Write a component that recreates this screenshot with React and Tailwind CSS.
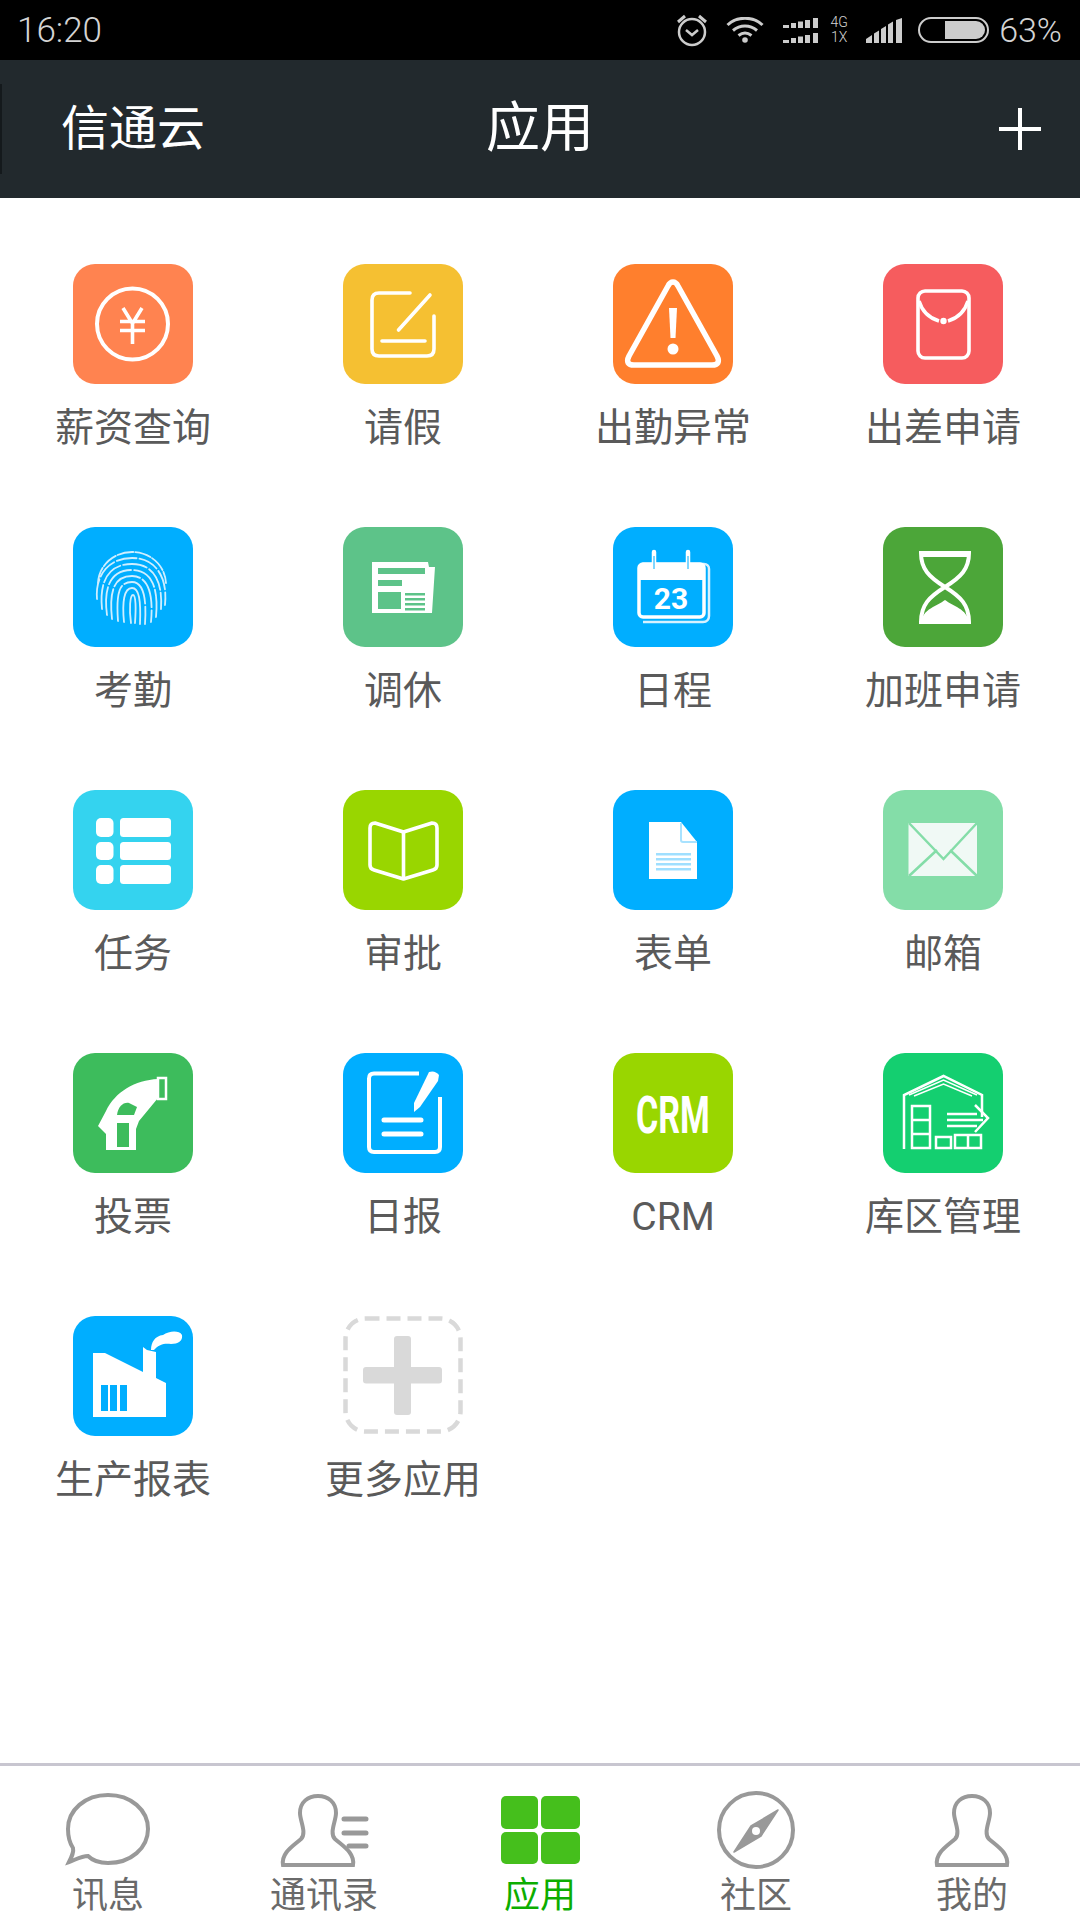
import React from "react";

const W = "#ffffff";

// app icons, all drawn on a 120x120 box
const Salary = () => (
  <g fill="none" stroke={W}>
    <circle cx="59.5" cy="60" r="35.5" strokeWidth="4" />
    <path d="M50 44l9.500 15.500L69 44M59.500 59v21M47 57.500h25M47 66.500h25" strokeWidth="3.600" />
  </g>
);
const Leave = () => (
  <g fill="none" stroke={W} strokeWidth="3.600" strokeLinecap="round">
    <path d="M67 29H36q-7 0-7 7v49q0 7 7 7h48q7 0 7-7V52" />
    <path d="M87 31L55.500 66M39 77h43" />
  </g>
);
const Alert = () => (
  <g>
    <path d="M60 18c-3 0-4 2-5 4L16 92c-3 6-1 9 5 9h78c6 0 8-3 5-9L65 22c-1-2-2-4-5-4z" fill="none" stroke={W} strokeWidth="5.500" strokeLinejoin="round" />
    <path d="M56 44h8l-1.500 30h-5z" fill={W} />
    <circle cx="60" cy="85" r="5.500" fill={W} />
  </g>
);
const RedPacket = () => (
  <g fill="none" stroke={W} strokeWidth="3.600">
    <rect x="35" y="27" width="51" height="67" rx="7" />
    <path d="M36 37c3 10 10 17 20 20M85 37c-3 10-10 17-20 20" />
    <circle cx="60.500" cy="57" r="3.200" fill={W} stroke="none" />
  </g>
);
const Fingerprint = () => (
  <g fill="none" stroke="#cfeeff" strokeWidth="1.800" strokeLinecap="round">
    <path d="M25 56C26 38 41 25 59 25c18 0 33 13 34 31" strokeDasharray="16 2" />
    <path d="M24 72c-2-24 12-41 35-41 22 0 36 17 33 47" strokeDasharray="20 3" />
    <path d="M29 82c-3-30 8-45 30-45 20 0 31 15 29 45" strokeDasharray="24 3" />
    <path d="M34 88c-4-30 5-45 25-45 18 0 27 15 24 47" strokeDasharray="28 3" />
    <path d="M39 92c-3-28 2-43 20-43 14 0 22 14 19 46" strokeDasharray="30 3" />
    <path d="M45 94c-2-26 0-39 14-39 10 0 15 12 13 42" strokeDasharray="36 3" />
    <path d="M51 95c-2-20 0-34 8-34 7 0 9 12 8 36" />
    <path d="M58 96c-2-14-1-28 2-28 3 0 3 14 2 28" />
  </g>
);
const News = () => (
  <g>
    <path d="M29 35h56l1 5h6l-3 46H29z" fill={W} />
    <path d="M35 41h47v6H35zM35 53h24v6H35zM35 65h23v17H35zM62 66h20v2.400H62zM62 71h20v2.400H62zM62 76h20v2.400H62zM62 81h20v2.400H62z" fill="#5dc389" />
  </g>
);
const Calendar = () => (
  <g>
    <path d="M29 37h62c3 0 5 2 5 5v47c0 3-2 6-6 6H30" fill="none" stroke="#d8f1ff" strokeWidth="2.500" />
    <rect x="26" y="37" width="65" height="53" rx="4" fill="#00aeff" stroke={W} strokeWidth="3.500" />
    <path d="M26 41q0-4 4-4h57q4 0 4 4v12H26z" fill={W} />
    <path d="M41 25v20M75 25v20" stroke={W} strokeWidth="4.500" strokeLinecap="round" />
    <path d="M41 29v13M75 29v13" stroke="#00aeff" strokeWidth="1" />
    <text x="58" y="82" textAnchor="middle" fontSize="30" fontWeight="700" fill={W} fontFamily="Roboto, sans-serif">23</text>
  </g>
);
const Hourglass = () => (
  <g>
    <path d="M38 26h48c0 16-8 24-24 34c16 10 24 18 24 35H38c0-17 8-25 24-35C46 50 38 42 38 26z" fill="none" stroke={W} strokeWidth="4" />
    <path d="M38 24h48v6H38zM62 73c8 6 22 9 24 22H38c2-13 16-16 24-22z" fill={W} />
  </g>
);
const Tasks = () => (
  <g fill={W}>
    <rect x="23" y="28" width="17.500" height="19" rx="5" />
    <rect x="47" y="28" width="51" height="19" rx="3.500" />
    <rect x="23" y="52" width="17.500" height="18" rx="5" />
    <rect x="47" y="52" width="51" height="18" rx="3.500" />
    <rect x="23" y="75" width="17.500" height="19" rx="5" />
    <rect x="47" y="75" width="51" height="19" rx="3.500" />
  </g>
);
const Book = () => (
  <g fill="none" stroke={W} strokeWidth="3.600" strokeLinejoin="round">
    <path d="M60.500 42L32 33q-5 0-5 5v37q0 4 4 5l29.500 9 29.500-9q4-1 4-5V38q0-5-5-5z" />
    <path d="M60.500 42v47" />
  </g>
);
const Form = () => (
  <g>
    <path d="M36 32h32l16 20v37H36z" fill={W} />
    <path d="M68 33v17q0 2 2 2h14" fill="none" stroke="#a8e2ff" strokeWidth="2" />
    <path d="M43 63h35v2.500H43zM43 68h35v2.500H43zM43 73h35v2.500H43zM43 78h35v2.500H43z" fill="#9fdfff" />
  </g>
);
const Mail = () => (
  <g>
    <rect x="25.500" y="33" width="68.500" height="53" fill="#f0f9f5" />
    <path d="M26 33l34.500 36L94 33M26 86l28-26M94 86L67 60" fill="none" stroke="#84dda8" strokeWidth="2.500" />
  </g>
);
const Vote = () => (
  <g>
    <path d="M85 26C62 27 42 39 33 58l-8 15 8 8v16h30V76l3-8 19-23z" fill={W} />
    <rect x="85" y="25" width="8" height="21" fill="none" stroke={W} strokeWidth="2.500" />
    <path d="M44 62c1-8 6-13 12-12l8 4-3 8z" fill="#3dbc5c" />
    <rect x="44" y="70" width="12" height="24" fill="#3dbc5c" />
  </g>
);
const Daily = () => (
  <g>
    <path d="M76 20.500H31q-5 0-5 5V94q0 5 5 5h61q5 0 5-5V44" fill="none" stroke={W} strokeWidth="4" />
    <path d="M86 19q6-2 10 3l-1 6-18 26-6 5 0-9z" fill={W} />
    <path d="M41 67h37M41 81h37" stroke={W} strokeWidth="5" strokeLinecap="round" />
  </g>
);
const Crm = () => (
  <text transform="translate(60 80) scale(1 1.550)" textAnchor="middle" fontSize="34" fontWeight="700" fill={W} fontFamily="Roboto, sans-serif">
    CRM
  </text>
);
const Warehouse = () => (
  <g fill="none" stroke={W} strokeWidth="2.500">
    <path d="M21 96V42l39.500-19L99 42v22" />
    <path d="M26 42l34.500-15L94 42M31 43l29.500-12L89 43" strokeWidth="1.500" />
    <path d="M29 53h18v42H29zM29 67h18M29 81h18M53 84h15v11H53zM72 82h26v13H72zM85 82v13" />
    <path d="M64 61h30M64 67h36M64 73h30" />
    <path d="M92 52l13 13-13 14" />
  </g>
);
const Factory = () => (
  <g>
    <path d="M20 37h12l38 19V31l4 3 9 2v26l10 5v34H20z" fill={W} />
    <path d="M28 69h7v26h-7zM37 69h7v26h-7zM47 69h7v26h-7z" fill="#00aeff" />
    <path d="M78 34C78 26 82 20 90 19C96 15 106 14 109 19C110 25 105 28 98 28C92 27 86 28 81 34Z" fill={W} />
  </g>
);
const More = () => (
  <g>
    <rect x="2.500" y="2.500" width="115" height="113" rx="20" fill="none" stroke="#d9d9d9" strokeWidth="4.500" strokeDasharray="14 7" />
    <rect x="20" y="51" width="79" height="16.500" rx="3" fill="#d9d9d9" />
    <rect x="51" y="20" width="17" height="79" rx="3" fill="#d9d9d9" />
  </g>
);

const apps = [
  { label: "薪资查询", bg: "bg-[#ff8350]", Icon: Salary },
  { label: "请假", bg: "bg-[#f5c032]", Icon: Leave },
  { label: "出勤异常", bg: "bg-[#ff7f2d]", Icon: Alert },
  { label: "出差申请", bg: "bg-[#f65c5e]", Icon: RedPacket },
  { label: "考勤", bg: "bg-[#00aeff]", Icon: Fingerprint },
  { label: "调休", bg: "bg-[#5dc389]", Icon: News },
  { label: "日程", bg: "bg-[#00aeff]", Icon: Calendar },
  { label: "加班申请", bg: "bg-[#4ca639]", Icon: Hourglass },
  { label: "任务", bg: "bg-[#34d3ef]", Icon: Tasks },
  { label: "审批", bg: "bg-[#99d600]", Icon: Book },
  { label: "表单", bg: "bg-[#00aeff]", Icon: Form },
  { label: "邮箱", bg: "bg-[#84dda8]", Icon: Mail },
  { label: "投票", bg: "bg-[#3dbc5c]", Icon: Vote },
  { label: "日报", bg: "bg-[#00aeff]", Icon: Daily },
  { label: "CRM", bg: "bg-[#99d600]", Icon: Crm },
  { label: "库区管理", bg: "bg-[#14cf70]", Icon: Warehouse },
  { label: "生产报表", bg: "bg-[#00aeff]", Icon: Factory },
  { label: "更多应用", bg: "bg-white", Icon: More },
];

const personPath =
  "M10 74H80C82 62 70 55 62 48C56 42 63 30 63 22C63 11 55 5 45 5C35 5 27 11 27 22C27 30 34 42 28 48C20 55 8 62 10 74Z";

const tabs = [
  {
    label: "讯息",
    icon: (
      <path
        d="M6 71C9 65 11 61 10 57C6 51 5 44 5 38C5 19 22 4 45 4C68 4 85 19 85 38C85 57 68 72 45 72C35 72 29 69 25 65C18 65 12 69 6 71Z"
        fill="none"
        stroke="#999"
        strokeWidth="4"
      />
    ),
  },
  {
    label: "通讯录",
    icon: (
      <g>
        <path d={personPath} transform="translate(-6 0)" fill="none" stroke="#999" strokeWidth="4" />
        <path d="M65 28h22M65 42h22M70 55h17" stroke="#999" strokeWidth="5" strokeLinecap="round" />
      </g>
    ),
  },
  {
    label: "应用",
    active: true,
    icon: (
      <g fill="#45bf1c">
        <rect x="6" y="5" width="37" height="33" rx="5" />
        <rect x="46" y="5" width="39" height="33" rx="5" />
        <rect x="6" y="41" width="37" height="32" rx="5" />
        <rect x="46" y="41" width="39" height="32" rx="5" />
      </g>
    ),
  },
  {
    label: "社区",
    icon: (
      <g>
        <circle cx="45" cy="39" r="37" fill="none" stroke="#999" strokeWidth="4" />
        <path d="M67 19L50 45L23 61L40 35Z" fill="#999" stroke="#999" strokeWidth="1.500" strokeLinejoin="round" />
        <circle cx="45" cy="40" r="4" fill="#fff" />
      </g>
    ),
  },
  {
    label: "我的",
    icon: <path d={personPath} fill="none" stroke="#999" strokeWidth="4" />,
  },
];

function StatusIcons() {
  return (
    <div className="flex items-center text-[#d4d4d4]">
      <svg width="34" height="34" viewBox="0 0 32 34" fill="none" stroke="#ccc" strokeWidth="2.500">
        <circle cx="16" cy="19" r="13" />
        <path d="M10 17l6 5 6-5" />
        <path d="M2 9l7-6M30 9l-7-6" strokeWidth="3" />
      </svg>
      <svg className="ml-[16px]" width="40" height="26" viewBox="0 0 38 26" fill="none" stroke="#ccc" strokeWidth="3">
        <path d="M1.500 8C11 -1 27 -1 36.500 8M7 13.500C14 7.500 24 7.500 31 13.500M12.500 18.500C16.500 15.500 21.500 15.500 25.500 18.500" />
        <circle cx="19" cy="23" r="2.800" fill="#ccc" stroke="none" />
      </svg>
      <svg className="ml-[18px]" width="37" height="25" viewBox="0 0 37 25" fill="#ccc">
        <path d="M0 7h6v3H0zM8 5h5v5H8zM15 3.500h5V10h-5zM22 2h5v8h-5zM30 0h5v10h-5z" />
        <path d="M0 22h6v3H0zM8 20h5v5H8zM15 18.500h5V25h-5zM22 17h5v8h-5zM30 15h5v10h-5z" />
      </svg>
      <div className="ml-[9px] flex w-[20px] flex-col items-center text-[14px] font-light leading-[15px]">
        <span>4G</span>
        <span>1X</span>
      </div>
      <svg className="ml-[17px]" width="37" height="25" viewBox="0 0 37 25" fill="#ccc">
        <path d="M0 21L6 17V25H0zM8 15.500L13 12.500V25H8zM15 11L20 8V25H15zM22 6.500L27 3.500V25H22zM30 2L36 0V25H30z" />
      </svg>
      <div className="ml-[15px] flex h-[26px] w-[71px] justify-end rounded-full border-2 border-[#cccccc] p-[2px]">
        <div className="h-full w-[40px] rounded-r-full bg-[#cccccc]" />
      </div>
      <span className="ml-[10px] text-[34px] leading-none font-light">63%</span>
    </div>
  );
}

export default function App() {
  return (
    <div className="flex h-[1920px] w-[1080px] flex-col overflow-hidden bg-white font-['Roboto','Noto_Sans_CJK_SC',sans-serif]">
      {/* status bar */}
      <div className="flex h-[60px] items-center justify-between bg-black pr-[18px] pl-[17px]">
        <span className="text-[35px] leading-none font-light text-[#d4d4d4]">16:20</span>
        <StatusIcons />
      </div>

      {/* title bar */}
      <div className="grid h-[138px] grid-cols-[1fr_auto_1fr] items-center bg-[#22292d] text-white">
        <div className="flex items-center">
          <div className="h-[90px] w-[2px] bg-[#14191c]" />
          <span className="ml-[59px] text-[48px] leading-none">信通云</span>
        </div>
        <span className="text-[54px] leading-none">应用</span>
        <div className="flex justify-end pr-[39px]">
          <svg width="42" height="42" viewBox="0 0 42 42" stroke="#fff" strokeWidth="4">
            <path d="M0 21h42M21 0v42" />
          </svg>
        </div>
      </div>

      {/* app grid */}
      <div className="-ml-[2px] grid flex-1 grid-cols-[repeat(4,270px)] content-start pt-[66px]">
        {apps.map(({ label, bg, Icon }) => (
          <div key={label} className="flex h-[263px] flex-col items-center">
            <div className={`h-[120px] w-[120px] overflow-hidden rounded-[22px] ${bg}`}>
              <svg width="120" height="120" viewBox="0 0 120 120">
                <Icon />
              </svg>
            </div>
            <span className="mt-[21px] text-[39px] leading-[46px] text-[#5a5a5a]">{label}</span>
          </div>
        ))}
      </div>

      {/* bottom tabs */}
      <div className="grid h-[157px] grid-cols-5 border-t-[3px] border-[#c8c6d0] pt-[25px]">
        {tabs.map((tab) => (
          <div key={tab.label} className="flex flex-col items-center">
            <svg width="90" height="80" viewBox="0 0 90 80">
              {tab.icon}
            </svg>
            <span className={`text-[36px] leading-[51px] ${tab.active ? "text-[#0cad00]" : "text-[#6a6a6a]"}`}>
              {tab.label}
            </span>
          </div>
        ))}
      </div>
    </div>
  );
}
